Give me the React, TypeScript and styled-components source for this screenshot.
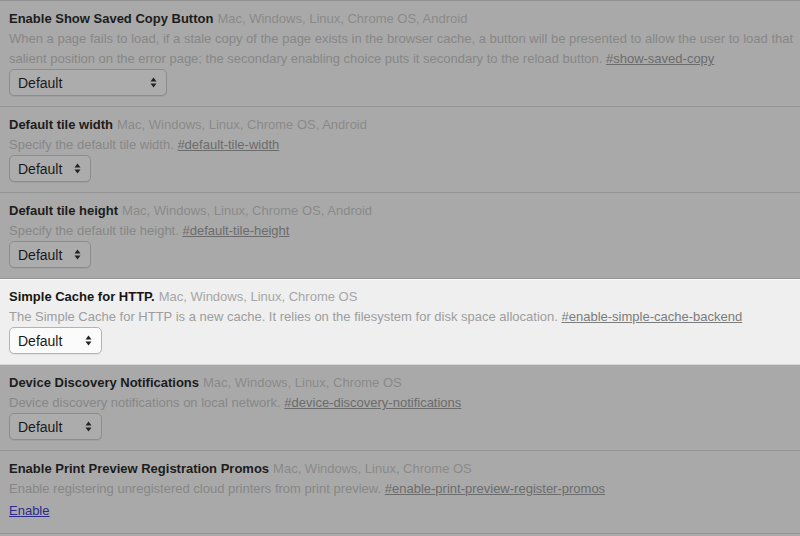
import React from "react";
import styled, { createGlobalStyle } from "styled-components";

const Global = createGlobalStyle`
  html, body { margin: 0; padding: 0; }
  body {
    background: #a9a9a9;
    font-family: "Liberation Sans", Arial, Helvetica, sans-serif;
    overflow: hidden;
  }
`;

const Page = styled.div`
  width: 800px;
  height: 536px;
  overflow: hidden;
  border-top: 1px solid #929292;
  background: #a9a9a9;
`;

const Row = styled.section<{ $hl?: boolean }>`
  display: flex;
  flex-direction: column;
  align-items: flex-start;
  padding: 8px 9px 10px;
  background: ${(p) => (p.$hl ? "#efefef" : "#a9a9a9")};
  border-bottom: 1px solid ${(p) => (p.$hl ? "#d8d8d8" : "#959595")};
  box-shadow: ${(p) => (p.$hl ? "inset 0 1px 0 #fafafa" : "none")};
`;

const Header = styled.div`
  font-size: 13px;
  line-height: 20px;
  white-space: nowrap;
`;

const Title = styled.span<{ $hl?: boolean }>`
  font-weight: bold;
  color: ${(p) => (p.$hl ? "#151515" : "#1c1c1c")};
`;

const Platforms = styled.span<{ $hl?: boolean }>`
  color: ${(p) => (p.$hl ? "#a6a6a6" : "#898989")};
  margin-left: 4px;
`;

const Desc = styled.div<{ $hl?: boolean }>`
  font-size: 13px;
  line-height: 20px;
  white-space: nowrap;
  color: ${(p) => (p.$hl ? "#9d9d9d" : "#878787")};
`;

const Hash = styled.a<{ $hl?: boolean }>`
  color: ${(p) => (p.$hl ? "#7c7c7c" : "#6c6c6c")};
  text-decoration: underline;
`;

const Select = styled.div<{ $hl?: boolean; $w: number }>`
  box-sizing: border-box;
  width: ${(p) => p.$w}px;
  height: 27px;
  display: flex;
  align-items: center;
  justify-content: space-between;
  padding: 0 9px 0 8px;
  border-radius: 5px;
  border: 1px solid ${(p) => (p.$hl ? "#b3b3b3" : "#8c8c8c")};
  background: ${(p) => (p.$hl ? "#fbfbfb" : "#acacac")};
  box-shadow: 0 1px 0 ${(p) => (p.$hl ? "#e2e2e2" : "#a0a0a0")};
  font-size: 14px;
  color: #1a1a1a;
`;

const EnableLink = styled.a`
  margin: 2px 0 2px;
  font-size: 13px;
  line-height: 20px;
  color: #2d2a8e;
  text-decoration: underline;
`;

const Arrows = () => (
  <svg width="7" height="11" viewBox="0 0 7 11">
    <path d="M3.5 0.5 L6.5 4.5 L0.5 4.5 Z" fill="#222" />
    <path d="M3.5 10.5 L6.5 6.5 L0.5 6.5 Z" fill="#222" />
  </svg>
);

type Flag = {
  title: string;
  platforms: string;
  desc: React.ReactNode[];
  hash: string;
  select?: number;
  hl?: boolean;
  enable?: boolean;
};

const flags: Flag[] = [
  {
    title: "Enable Show Saved Copy Button",
    platforms: "Mac, Windows, Linux, Chrome OS, Android",
    desc: [
      "When a page fails to load, if a stale copy of the page exists in the browser cache, a button will be presented to allow the user to load that",
      "salient position on the error page; the secondary enabling choice puts it secondary to the reload button. ",
    ],
    hash: "#show-saved-copy",
    select: 158,
  },
  {
    title: "Default tile width",
    platforms: "Mac, Windows, Linux, Chrome OS, Android",
    desc: ["Specify the default tile width. "],
    hash: "#default-tile-width",
    select: 82,
  },
  {
    title: "Default tile height",
    platforms: "Mac, Windows, Linux, Chrome OS, Android",
    desc: ["Specify the default tile height. "],
    hash: "#default-tile-height",
    select: 82,
  },
  {
    title: "Simple Cache for HTTP.",
    platforms: "Mac, Windows, Linux, Chrome OS",
    desc: [
      "The Simple Cache for HTTP is a new cache. It relies on the filesystem for disk space allocation. ",
    ],
    hash: "#enable-simple-cache-backend",
    select: 93,
    hl: true,
  },
  {
    title: "Device Discovery Notifications",
    platforms: "Mac, Windows, Linux, Chrome OS",
    desc: ["Device discovery notifications on local network. "],
    hash: "#device-discovery-notifications",
    select: 93,
  },
  {
    title: "Enable Print Preview Registration Promos",
    platforms: "Mac, Windows, Linux, Chrome OS",
    desc: ["Enable registering unregistered cloud printers from print preview. "],
    hash: "#enable-print-preview-register-promos",
    enable: true,
  },
];

export default function App() {
  return (
    <>
      <Global />
      <Page>
        {flags.map((f) => (
          <Row key={f.hash} $hl={f.hl}>
            <Header>
              <Title $hl={f.hl}>{f.title}</Title>
              <Platforms $hl={f.hl}>{f.platforms}</Platforms>
            </Header>
            {f.desc.map((d, i) => (
              <Desc key={i} $hl={f.hl}>
                {d}
                {i === f.desc.length - 1 && <Hash $hl={f.hl}>{f.hash}</Hash>}
              </Desc>
            ))}
            {f.select && (
              <Select $hl={f.hl} $w={f.select}>
                <span>Default</span>
                <Arrows />
              </Select>
            )}
            {f.enable && <EnableLink>Enable</EnableLink>}
          </Row>
        ))}
      </Page>
    </>
  );
}
